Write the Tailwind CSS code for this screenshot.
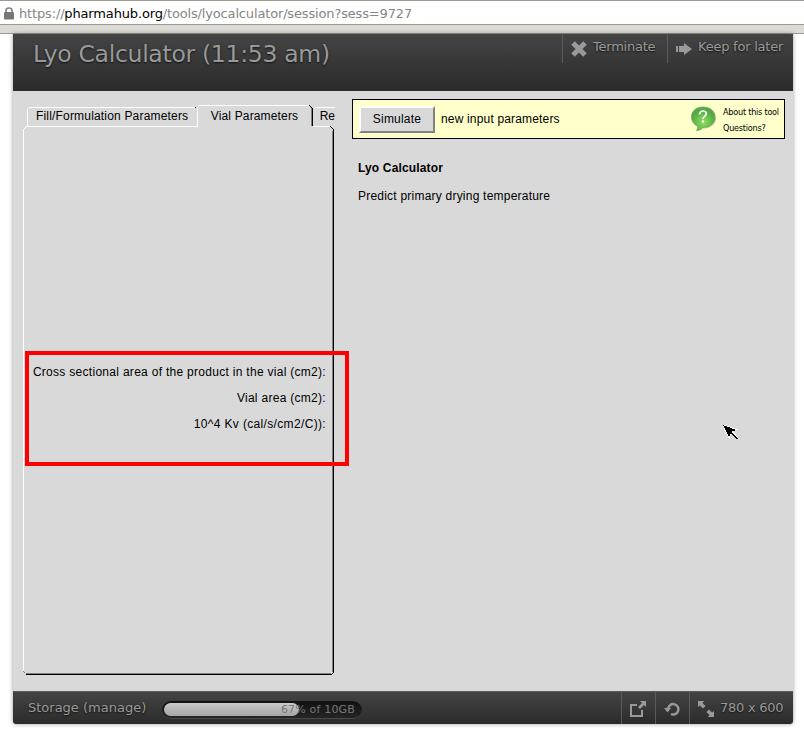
<!DOCTYPE html>
<html lang="en">
<head>
<meta charset="utf-8">
<title>Lyo Calculator</title>
<script src="https://cdn.jsdelivr.net/npm/@tailwindcss/browser@4"></script>
</head>
<body class="w-[804px] h-[731px] overflow-hidden bg-white font-['DejaVu_Sans',sans-serif]">
<div class="h-[34px] bg-[#dcdad5]">
  <div class="h-[25px] border-t border-b border-t-[#9d9a90] border-b-[#9d9a90] bg-white flex items-center pt-[3px]">
    <svg class="w-[10px] h-[13px] ml-1 mb-[2px] shrink-0" viewBox="0 0 10 13"><path d="M2 6V3.5Q2 1 5 1T8 3.5V6" fill="none" stroke="#858585" stroke-width="1.7"/><rect y="5" width="10" height="7.5" rx="1" fill="#777"/></svg>
    <div class="ml-[5px] text-[13px] leading-[18px] text-[#858585] whitespace-nowrap tracking-[-0.155px]">https://<span class="text-black">pharmahub.org</span>/tools/lyocalculator/session?sess=9727</div>
  </div>
  <div class="h-[9px] border-b border-[#9d9a90]"></div>
</div>
<main class="ml-[13px] w-[780px] h-[690px] rounded-b-[3px] shadow-[0_0_4px_rgba(0,0,0,0.4)] overflow-hidden">
  <header class="h-[57px] bg-linear-to-b from-[#444] to-[#2b2b2b] flex justify-between text-[#999]">
    <h1 class="ml-5 mt-[4px] text-[23.5px] leading-[32px] whitespace-nowrap tracking-[-0.3px] [text-shadow:0_1px_2px_#111]">Lyo Calculator (11:53 am)</h1>
    <nav class="flex h-[29px] text-[13px] leading-[26px] tracking-[-0.23px] [text-shadow:0_1px_2px_#111]">
      <div class="w-[105px] border-l border-[#5a5a5a] flex pl-2 whitespace-nowrap"><svg class="w-4 h-4 mt-[7px] mr-[6px] shrink-0" viewBox="0 0 16 16"><path d="M2 2l12 12M14 2L2 14" stroke="#999" stroke-width="5"/></svg>Terminate</div>
      <div class="w-[126px] border-l border-[#5a5a5a] flex pl-2 whitespace-nowrap"><svg class="w-4 h-3 mt-[9px] mr-[6px] shrink-0" viewBox="0 0 16 12"><path d="M0 3h2v6H0zM3 3h5V0l8 6-8 6V9H3z" fill="#999"/></svg>Keep for later</div>
    </nav>
  </header>
  <div class="h-[600px] bg-[#d9d9d9] flex text-[12px] leading-[14px] text-black font-['Liberation_Sans',sans-serif] whitespace-nowrap">
    <section class="relative w-[322px] h-full shrink-0 overflow-hidden">
      <svg class="absolute left-0 top-0 w-[322px] h-[600px]" viewBox="13 91 322 600" fill="none" shape-rendering="crispEdges">
        <path d="M27.500 126V109.500L29.500 107.500H195M197.500 126V107.500L199.500 105.500H309M27 126.500H198M313 126.500H330M313.500 109.500L315.500 107.500H335M23.500 672V129.500L26.500 126.500" stroke="#fff"/>
        <path d="M311.500 108V126M332.500 131V672M26 673.500H331M23.500 671.500L25.500 673.500" stroke="#808080"/>
        <path d="M309.500 105.500L312.500 108.500V126M195.500 107.500L196.500 108.500M330.500 126.500L333.500 129.500V672.500L331.500 674.500H26" stroke="#000"/>
      </svg>
      <div class="relative flex h-[35px] pl-[23px] pt-[18px]"><span class="w-[174px] tracking-[0.18px]">Fill/Formulation Parameters</span><span class="w-[110px] pl-px tracking-[0.15px]">Vial Parameters</span><span>Re</span></div>
      <div class="relative mt-[225px] ml-[12px] w-[324px] h-[116px] pt-[14px] pr-[23px] flex flex-col gap-3 items-end tracking-[0.29px]"><span>Cross sectional area of the product in the vial (cm2):</span><span>Vial area (cm2):</span><span class="tracking-[0.34px]">10^4 Kv (cal/s/cm2/C)):</span></div>
    </section>
    <section class="ml-[17px] w-[433px] pt-2">
      <div class="h-[40px] bg-[#ffffcc] border border-black flex items-center pl-[6px]">
        <button class="w-[76px] h-[27px] bg-[#d9d9d9] border-2 border-t-white border-l-white border-r-[#828282] border-b-[#828282] tracking-[0.2px]">Simulate</button>
        <span class="ml-[6px] tracking-[0.17px]">new input parameters</span>
        <svg class="w-[26px] h-[26px] ml-auto mr-[6px]" viewBox="0 0 26 26"><defs><radialGradient id="bubble" cx="50%" cy="65%"><stop stop-color="#8bdf5c"/><stop offset="1" stop-color="#55a945"/></radialGradient></defs><ellipse cx="13" cy="12.500" rx="12" ry="10" fill="#84866e" opacity=".45"/><path d="M12 1C5 1 .5 5 .5 11c0 4 2 7 6 9 .5 2 0 3-1 4.500 3.500 0 5.500-1.500 6.500-3.500 7 1 12-4 12-10S19 1 12 1Z" fill="url(#bubble)" stroke="#61a84c" stroke-width=".7"/><path d="M8.500 8.500Q9 5 12 5c4 0 4 4 1.500 5.500Q12 11.500 12 13" fill="none" stroke="#fff" stroke-width="1.700"/><circle cx="12" cy="15.500" r="1.200" fill="#fff"/></svg>
        <div class="w-[61px] pt-[2px] text-[9px] leading-4 font-['DejaVu_Sans_Condensed','DejaVu_Sans',sans-serif] tracking-[-0.22px]">About this tool<br>Questions?</div>
      </div>
      <h2 class="ml-[6px] mt-[22px] font-bold tracking-[0.15px]">Lyo Calculator</h2>
      <p class="ml-[6px] mt-[14px] tracking-[0.22px]">Predict primary drying temperature</p>
    </section>
  </div>
  <footer class="h-[33px] border-t border-[#5a5a5a] bg-linear-to-b from-[#444] to-[#2b2b2b] flex text-[#999] text-[13px] leading-[32px] whitespace-nowrap [text-shadow:0_1px_2px_#111]">
    <span class="ml-[15px] w-[134px]">Storage (manage)</span>
    <div class="relative mt-[9px] w-[200px] h-[18px] p-[2px] rounded-full bg-linear-to-b from-[#111] to-[#252525] border-b border-[#484848]">
      <div class="w-[135px] h-[13px] rounded-full bg-linear-to-b from-[#cbc9cb] to-[#a5a5a5]"></div>
      <span class="absolute right-[7px] top-0 text-[11px] leading-[17px] tracking-[0.18px] text-[#777] [text-shadow:none]">67% of 10GB</span>
    </div>
    <div class="ml-auto flex">
      <div class="w-[34px] border-l border-[#5a5a5a] pl-2 pt-[9px]"><svg class="w-4 h-4" viewBox="0 0 16 16"><path d="M7 4H1v11h11V9" fill="none" stroke="#999" stroke-width="2"/><path d="M10 0h6v6l-2-2-4 4-2-2 4-4z" fill="#999"/></svg></div>
      <div class="w-[34px] border-l border-[#5a5a5a] pl-2 pt-[9px]"><svg class="w-4 h-4" viewBox="0 0 16 16"><path d="M4 8a5.200 5.200 0 1 1 3 5" fill="none" stroke="#999" stroke-width="2.400"/><path d="M0 7h7L3.500 11.500z" fill="#999"/></svg></div>
      <div class="w-[104px] border-l border-[#5a5a5a] pl-2 flex tracking-[-0.25px]"><svg class="w-4 h-4 mt-[9px] mr-[6px] shrink-0" viewBox="0 0 16 16"><path d="M0 0h6L4.500 2l3 3-2.500 2.500-3-3L0 6zM16 16h-6l1.500-2-3-3L11 8.500l3 3 2-1.500z" fill="#999"/></svg>780 x 600</div>
    </div>
  </footer>
</main>
<div class="absolute left-[25px] top-[351px] w-[324px] h-[115px] border-4 border-[#f00]"></div>
<svg class="absolute left-[723px] top-[425px] w-[16px] h-[16px]" viewBox="0 0 16 16" shape-rendering="crispEdges"><path d="M1 1l11 3.500-3.500 1.500 6 7.500-7-6.500L6 12z" fill="#000" stroke="#fff" stroke-width="2"/><path d="M1 1l11 4-4 1.500L6 11zM7 6.500L14.500 14" fill="#000" stroke="#000" stroke-width="1"/></svg>
</body>
</html>
